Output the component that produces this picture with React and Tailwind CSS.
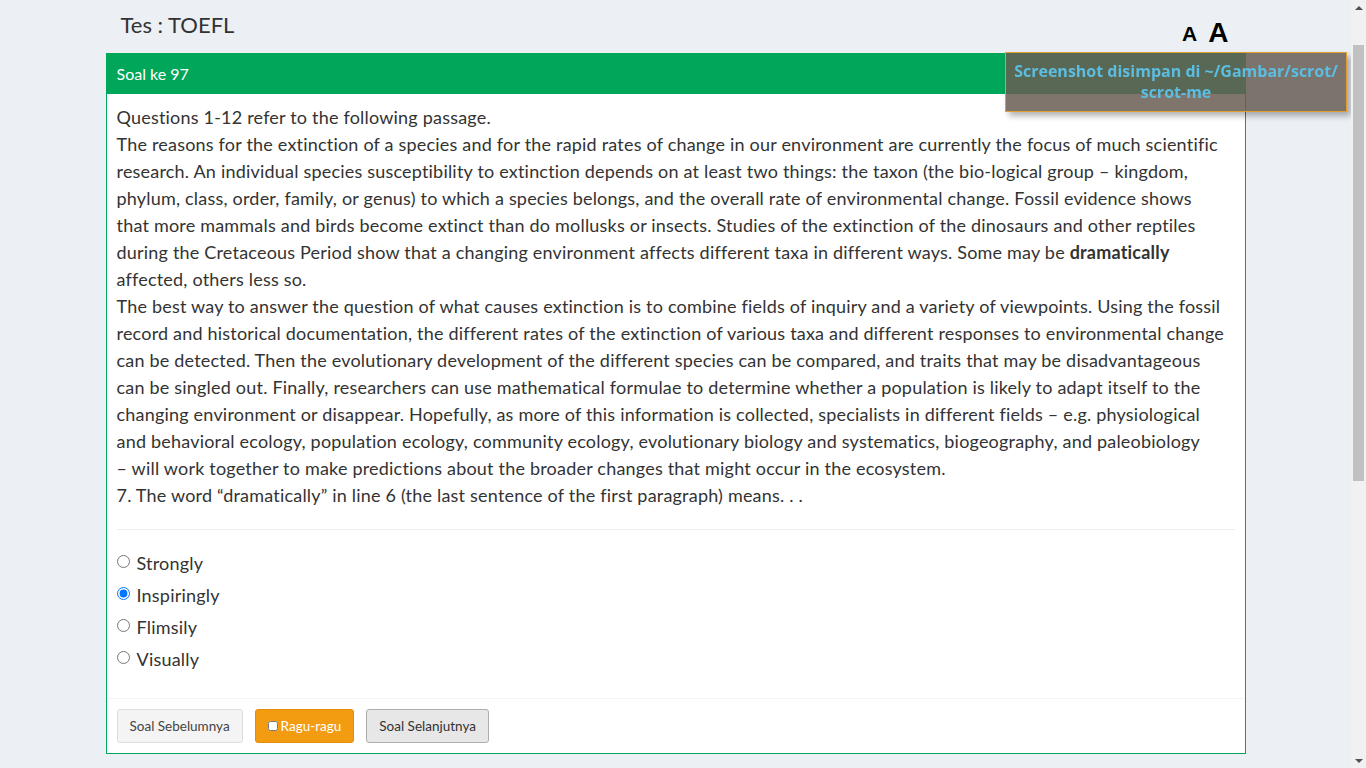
import React from 'react';

const options = ['Strongly', 'Inspiringly', 'Flimsily', 'Visually'];

// Font size switch in the page header
function FontSwitch() {
  return (
    <div className="flex items-center gap-[11px] pr-[17px] pt-[19px] font-['Liberation_Sans',Arial,sans-serif] font-bold text-black">
      <span className="text-[21px] leading-none">A</span>
      <span className="text-[28px] leading-none">A</span>
    </div>
  );
}

// Browser scrollbar as it shows in the capture
function ScrollBar() {
  return (
    <div className="fixed top-0 right-0 flex h-screen w-[15px] flex-col bg-[#f1f1f1]">
      <div className="flex h-[15px] items-center justify-center">
        <div className="h-0 w-0 border-x-[4px] border-b-[4px] border-x-transparent border-b-[#505050]" />
      </div>
      <div className="flex-1 px-[2px] pt-[30px]">
        <div className="h-[436px] bg-[#c1c1c1]" />
      </div>
      <div className="flex h-[15px] items-center justify-center">
        <div className="h-0 w-0 border-x-[4px] border-t-[4px] border-x-transparent border-t-[#505050]" />
      </div>
    </div>
  );
}

function Passage() {
  return (
    <div className="text-[18px] leading-[27px] tracking-[0.2px] text-[#333]">
      <p>Questions 1-12 refer to the following passage.</p>
      <p>
        The reasons for the extinction of a species and for the rapid rates of change in our environment are currently the focus of much scientific<br />
        research. An individual species susceptibility to extinction depends on at least two things: the taxon (the bio-logical group – kingdom,<br />
        phylum, class, order, family, or genus) to which a species belongs, and the overall rate of environmental change. Fossil evidence shows<br />
        that more mammals and birds become extinct than do mollusks or insects. Studies of the extinction of the dinosaurs and other reptiles<br />
        during the Cretaceous Period show that a changing environment affects different taxa in different ways. Some may be <b>dramatically</b><br />
        affected, others less so.
      </p>
      <p>
        The best way to answer the question of what causes extinction is to combine fields of inquiry and a variety of viewpoints. Using the fossil<br />
        record and historical documentation, the different rates of the extinction of various taxa and different responses to environmental change<br />
        can be detected. Then the evolutionary development of the different species can be compared, and traits that may be disadvantageous<br />
        can be singled out. Finally, researchers can use mathematical formulae to determine whether a population is likely to adapt itself to the<br />
        changing environment or disappear. Hopefully, as more of this information is collected, specialists in different fields – e.g. physiological<br />
        and behavioral ecology, population ecology, community ecology, evolutionary biology and systematics, biogeography, and paleobiology<br />
        – will work together to make predictions about the broader changes that might occur in the ecosystem.
      </p>
      <p>7. The word “dramatically” in line 6 (the last sentence of the first paragraph) means. . .</p>
    </div>
  );
}

export default function App() {
  return (
    <div className="min-h-screen bg-[#ecf0f5] pr-[15px] pb-[14px] font-['Source_Sans_Pro',Lato,sans-serif] text-[#333]">
      <div className="mx-auto w-[1170px] px-[15px]">
        <div className="flex h-[53px] items-start justify-between">
          <h1 className="pt-[12px] pl-[15px] text-[22px] leading-[26px] text-[#333]">Tes : TOEFL</h1>
          <FontSwitch />
        </div>

        <div className="border border-[#00a65a] bg-white">
          <div className="flex h-[40px] items-center bg-[#00a65a] px-[10px] text-[16px] text-white">
            Soal ke 97
          </div>
          <div className="px-[10px] pt-[10px]">
            <Passage />
            <hr className="mt-[20px] mb-[20px] border-[#eee]" />
            <div className="flex flex-col gap-[5px] pb-[25px]">
              {options.map((opt) => (
                <label key={opt} className="flex h-[27px] items-center text-[18px] leading-[27px] tracking-[0.2px]">
                  <input
                    type="radio"
                    name="jawab"
                    defaultChecked={opt === 'Inspiringly'}
                    className="mt-[-4px] ml-0 mr-[7px] h-[13px] w-[13px]"
                  />
                  {opt}
                </label>
              ))}
            </div>
          </div>
          <div className="flex items-center gap-[12px] border-t border-[#f4f4f4] p-[10px] text-[13.5px]">
            <button className="h-[34px] rounded-[3px] border border-[#ddd] bg-[#f4f4f4] px-[12px] text-[#444]">
              Soal Sebelumnya
            </button>
            <button className="flex h-[34px] items-center gap-[3px] rounded-[3px] border border-[#e08e0b] bg-[#f39c12] px-[12px] text-white">
              <input type="checkbox" className="h-[10px] w-[10px]" />
              Ragu-ragu
            </button>
            <button className="h-[34px] rounded-[3px] border border-[#adadad] bg-[#e7e7e7] px-[12px] text-[#333]">
              Soal Selanjutnya
            </button>
          </div>
        </div>
      </div>

      <div className="fixed top-[52px] right-[19px] flex h-[60px] w-[342px] items-center justify-center border border-[#e0a030] bg-[rgba(105,93,84,0.85)] px-[6px] text-center font-['Open_Sans',sans-serif] text-[16px] font-bold leading-[21px] text-[#5bbde0] shadow-[4px_4px_6px_rgba(0,0,0,0.3)]">
        Screenshot disimpan di ~/Gambar/scrot/ scrot-me
      </div>

      <ScrollBar />
    </div>
  );
}
